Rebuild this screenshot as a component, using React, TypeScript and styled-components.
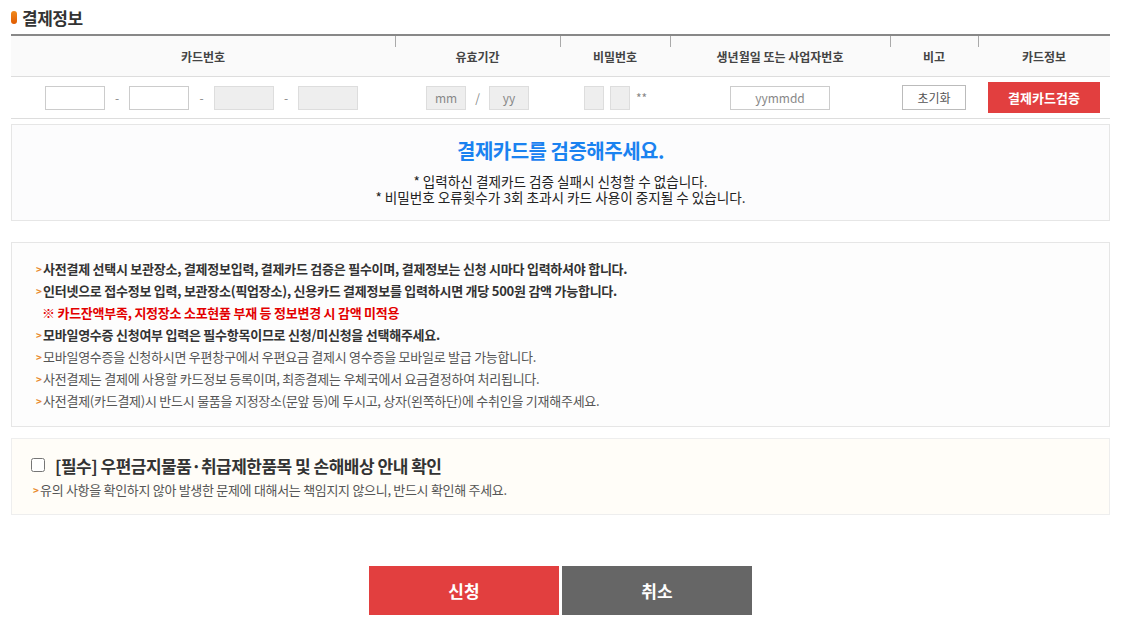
import React from "react";
import styled, { createGlobalStyle } from "styled-components";

const Global = createGlobalStyle`
  html, body { margin: 0; padding: 0; background: #fff; }
  body { font-family: "Noto Sans CJK KR", "Noto Sans", sans-serif; color: #333; }
  * { box-sizing: border-box; }
`;

const Page = styled.div`
  width: 1124px;
  padding: 4px 14px 0 11px;
`;

const TitleRow = styled.div`
  display: flex;
  align-items: center;
  gap: 5px;
  height: 26px;
`;

const Dot = styled.span`
  width: 6px;
  height: 13px;
  border-radius: 3px;
  background: linear-gradient(180deg, #f08a1c, #e05a00);
`;

const Title = styled.h2`
  margin: 0;
  font-size: 17px;
  font-weight: 700;
  color: #333;
  letter-spacing: -0.5px;
`;

const Table = styled.div`
  margin-top: 4px;
  border-top: 2px solid #888;
  display: grid;
  grid-template-columns: 384px 165px 110px 220px 88px 132px;
`;

const HeadCell = styled.div<{ $sep?: boolean }>`
  position: relative;
  height: 41px;
  background: #fafafa;
  border-bottom: 1px solid #ddd;
  display: flex;
  align-items: center;
  justify-content: center;
  font-size: 12px;
  font-weight: 700;
  color: #444;
  &::before {
    content: "";
    display: ${(p) => (p.$sep ? "block" : "none")};
    position: absolute;
    left: 0;
    top: 0;
    width: 1px;
    height: 11px;
    background: #aaa;
  }
`;

const BodyCell = styled.div<{ $padR?: number }>`
  height: 42px;
  border-bottom: 1px solid #ddd;
  display: flex;
  align-items: center;
  justify-content: center;
  padding-right: ${(p) => p.$padR ?? 0}px;
  font-size: 12px;
  color: #666;
`;

const Input = styled.input<{ $w: number; $gray?: boolean }>`
  width: ${(p) => p.$w}px;
  height: 24px;
  border: 1px solid ${(p) => (p.$gray ? "#ddd" : "#ccc")};
  background: ${(p) => (p.$gray ? "#eee" : "#fff")};
  font-family: inherit;
  font-size: 12px;
  text-align: center;
  color: #333;
  padding: 0;
  outline: none;
  &::placeholder { color: #888; }
`;

const Sep = styled.span<{ $w: number; $left?: boolean }>`
  width: ${(p) => p.$w}px;
  text-align: ${(p) => (p.$left ? "left" : "center")};
  padding-left: ${(p) => (p.$left ? "6px" : "0")};
  font-size: 12px;
  color: #888;
`;

const ResetBtn = styled.button`
  width: 64px;
  height: 25px;
  border: 1px solid #bbb;
  background: #fff;
  font-family: inherit;
  font-size: 12px;
  color: #555;
  padding: 0;
`;

const VerifyBtn = styled.button`
  width: 112px;
  height: 31px;
  border: none;
  background: #e23f3f;
  color: #fff;
  font-family: inherit;
  font-size: 13px;
  font-weight: 700;
  padding: 0;
`;

const VerifyBox = styled.div`
  margin-top: 5px;
  height: 97px;
  border: 1px solid #e6e6e6;
  background: #fcfcfd;
  display: flex;
  flex-direction: column;
  align-items: center;
  padding-top: 12px;
`;

const VerifyTitle = styled.div`
  font-size: 20px;
  font-weight: 700;
  color: #1a82f0;
  letter-spacing: -0.5px;
  line-height: 28px;
  margin-bottom: 8px;
`;

const VerifyNote = styled.div`
  font-size: 13.6px;
  line-height: 16px;
  height: 16px;
  color: #222;
  text-align: center;
`;

const InfoBox = styled.div`
  margin-top: 21px;
  border: 1px solid #e6e6e6;
  background: #fdfdfd;
  padding: 14px 20px 15px 24px;
`;

const InfoLine = styled.div<{ $bold?: boolean; $red?: boolean }>`
  display: flex;
  align-items: center;
  height: 22px;
  font-size: 13px;
  letter-spacing: -0.25px;
  font-weight: ${(p) => (p.$bold || p.$red ? 700 : 400)};
  color: ${(p) => (p.$red ? "#e30000" : p.$bold ? "#333" : "#555")};
  padding-left: ${(p) => (p.$red ? "6px" : "0")};
`;

const Arrow = styled.span`
  width: 7px;
  flex: none;
  font-size: 10px;
  font-weight: 700;
  color: #e9892c;
`;

const AgreeBox = styled.div`
  margin-top: 11px;
  height: 77px;
  border: 1px solid #eee;
  background: #fffdf8;
  padding: 14px 20px 0 19px;
`;

const AgreeRow = styled.label`
  display: flex;
  align-items: center;
  height: 24px;
  gap: 10px;
`;

const Check = styled.input`
  margin: 0;
  width: 14px;
  height: 14px;
`;

const AgreeTitle = styled.span`
  font-size: 17px;
  font-weight: 700;
  color: #333;
  letter-spacing: -0.5px;
`;

const AgreeNote = styled.div`
  display: flex;
  align-items: center;
  height: 24px;
  font-size: 13px;
  color: #555;
  letter-spacing: -0.3px;
  padding-left: 2px;
`;

const Actions = styled.div`
  margin-top: 51px;
  display: flex;
  justify-content: center;
  gap: 3px;
`;

const ActionBtn = styled.button<{ $bg: string }>`
  width: 190px;
  height: 49px;
  border: none;
  background: ${(p) => p.$bg};
  color: #fff;
  font-family: inherit;
  font-size: 17px;
  font-weight: 700;
`;

const heads = ["카드번호", "유효기간", "비밀번호", "생년월일 또는 사업자번호", "비고", "카드정보"];

const infos: { t: string; bold?: boolean; red?: boolean }[] = [
  { t: "사전결제 선택시 보관장소, 결제정보입력, 결제카드 검증은 필수이며, 결제정보는 신청 시마다 입력하셔야 합니다.", bold: true },
  { t: "인터넷으로 접수정보 입력, 보관장소(픽업장소), 신용카드 결제정보를 입력하시면 개당 500원 감액 가능합니다.", bold: true },
  { t: "※ 카드잔액부족, 지정장소 소포현품 부재 등 정보변경 시 감액 미적용", red: true },
  { t: "모바일영수증 신청여부 입력은 필수항목이므로 신청/미신청을 선택해주세요.", bold: true },
  { t: "모바일영수증을 신청하시면 우편창구에서 우편요금 결제시 영수증을 모바일로 발급 가능합니다." },
  { t: "사전결제는 결제에 사용할 카드정보 등록이며, 최종결제는 우체국에서 요금결정하여 처리됩니다." },
  { t: "사전결제(카드결제)시 반드시 물품을 지정장소(문앞 등)에 두시고, 상자(왼쪽하단)에 수취인을 기재해주세요." },
];

export default function App() {
  return (
    <>
      <Global />
      <Page>
        <TitleRow>
          <Dot />
          <Title>결제정보</Title>
        </TitleRow>
        <Table>
          {heads.map((h, i) => (
            <HeadCell key={h} $sep={i > 0}>{h}</HeadCell>
          ))}
          <BodyCell $padR={3}>
            <Input $w={60} />
            <Sep $w={24}>-</Sep>
            <Input $w={60} />
            <Sep $w={25}>-</Sep>
            <Input $w={60} $gray />
            <Sep $w={24}>-</Sep>
            <Input $w={60} $gray />
          </BodyCell>
          <BodyCell>
            <Input $w={40} $gray placeholder="mm" />
            <Sep $w={23}>/</Sep>
            <Input $w={40} $gray placeholder="yy" />
          </BodyCell>
          <BodyCell>
            <Input $w={20} $gray />
            <Sep $w={6}></Sep>
            <Input $w={20} $gray />
            <Sep $w={16} $left>**</Sep>
          </BodyCell>
          <BodyCell>
            <Input $w={100} placeholder="yymmdd" />
          </BodyCell>
          <BodyCell>
            <ResetBtn>초기화</ResetBtn>
          </BodyCell>
          <BodyCell>
            <VerifyBtn>결제카드검증</VerifyBtn>
          </BodyCell>
        </Table>
        <VerifyBox>
          <VerifyTitle>결제카드를 검증해주세요.</VerifyTitle>
          <VerifyNote>* 입력하신 결제카드 검증 실패시 신청할 수 없습니다.</VerifyNote>
          <VerifyNote>* 비밀번호 오류횟수가 3회 초과시 카드 사용이 중지될 수 있습니다.</VerifyNote>
        </VerifyBox>
        <InfoBox>
          {infos.map((l) => (
            <InfoLine key={l.t} $bold={l.bold} $red={l.red}>
              {!l.red && <Arrow>&gt;</Arrow>}
              {l.t}
            </InfoLine>
          ))}
        </InfoBox>
        <AgreeBox>
          <AgreeRow>
            <Check type="checkbox" />
            <AgreeTitle>[필수] 우편금지물품·취급제한품목 및 손해배상 안내 확인</AgreeTitle>
          </AgreeRow>
          <AgreeNote>
            <Arrow>&gt;</Arrow>
            유의 사항을 확인하지 않아 발생한 문제에 대해서는 책임지지 않으니, 반드시 확인해 주세요.
          </AgreeNote>
        </AgreeBox>
        <Actions>
          <ActionBtn $bg="#e23f3f">신청</ActionBtn>
          <ActionBtn $bg="#666">취소</ActionBtn>
        </Actions>
      </Page>
    </>
  );
}
